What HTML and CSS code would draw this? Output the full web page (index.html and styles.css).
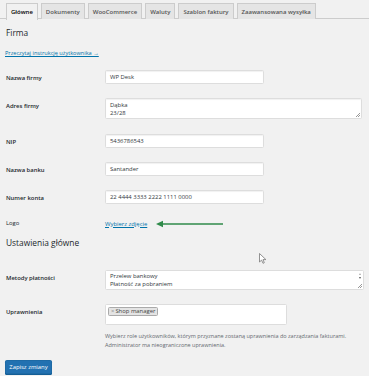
FILE: index.html
```html
<!DOCTYPE html>
<html lang="pl">
<head>
<meta charset="utf-8">
<link rel="stylesheet" href="styles.css">
</head>
<body>
<div class="page">
  <nav class="tabs">
    <a class="tab active">Główne</a>
    <a class="tab">Dokumenty</a>
    <a class="tab">WooCommerce</a>
    <a class="tab">Waluty</a>
    <a class="tab">Szablon faktury</a>
    <a class="tab">Zaawansowana wysyłka</a>
  </nav>

  <h2 class="heading h-firma">Firma</h2>
  <p class="manual"><a class="link">Przeczytaj instrukcję użytkownika →</a></p>

  <div class="form">
    <div class="row">
      <div class="label">Nazwa firmy</div>
      <div class="field"><div class="input w-reg">WP Desk</div></div>
    </div>
    <div class="row row-text">
      <div class="label">Adres firmy</div>
      <div class="field"><div class="textarea w-wide">Dąbka<br>23/28<span class="grip"></span></div></div>
    </div>
    <div class="row">
      <div class="label">NIP</div>
      <div class="field"><div class="input w-reg">5436786543</div></div>
    </div>
    <div class="row">
      <div class="label">Nazwa banku</div>
      <div class="field"><div class="input w-reg">Santander</div></div>
    </div>
    <div class="row">
      <div class="label">Numer konta</div>
      <div class="field"><div class="input w-reg">22 4444 3333 2222 1111 0000</div></div>
    </div>
    <div class="row row-logo">
      <div class="label label-plain">Logo</div>
      <div class="field field-logo">
        <a class="link link-logo">Wybierz zdjęcie</a>
        <svg class="arrow" width="68" height="8" viewBox="0 0 68 8"><path d="M4 4H67" stroke="#2f8a4a" stroke-width="1.6"/><path d="M0 4L7 0.8V7.2Z" fill="#2f8a4a"/></svg>
      </div>
    </div>
  </div>

  <h2 class="heading h-main">Ustawienia główne</h2>

  <div class="form form-main">
    <div class="row">
      <div class="label">Metody płatności</div>
      <div class="field">
        <div class="multiselect">
          <div class="opt">Przelew bankowy</div>
          <div class="opt">Płatność za pobraniem</div>
          <div class="scroll"><span class="up"></span><span class="down"></span></div>
          <span class="grip"></span>
        </div>
      </div>
    </div>
    <div class="row">
      <div class="label">Uprawnienia</div>
      <div class="field">
        <div class="select2"><span class="chip"><span class="x">×</span> Shop manager</span></div>
        <p class="desc">Wybierz role użytkowników, którym przyznane zostaną uprawnienia do zarządzania fakturami.<br>Administrator ma nieograniczone uprawnienia.</p>
      </div>
    </div>
  </div>

  <div class="actions"><button class="button-primary">Zapisz zmiany</button></div>

  <svg class="cursor" width="8" height="11" viewBox="0 0 8 11"><path d="M0.5 0.5V9L2.6 7.1L4 10.3L5.3 9.7L4 6.6H6.9Z" fill="#fff" stroke="#777" stroke-width="0.8" stroke-linejoin="round"/></svg>
</div>
</body>
</html>
```

FILE: styles.css
```css
html, body {
  margin: 0;
  padding: 0;
  background: #f1f1f1;
}
body {
  font-family: "Open Sans", "Liberation Sans", sans-serif;
  color: #23282d;
  font-size: 6px;
}
.page {
  position: relative;
  width: 369px;
  height: 376px;
  overflow: hidden;
}
.tabs {
  display: flex;
  gap: 3px;
  padding: 3px 0 0 6px;
  border-bottom: 1px solid #ccc;
  height: 15px;
}
.tab {
  display: flex;
  align-items: center;
  height: 15px;
  padding: 0 4px;
  background: #e5e5e5;
  border: 1px solid #ccc;
  border-bottom: none;
  font-size: 6px;
  font-weight: 600;
  color: #555;
  white-space: nowrap;
}
.tab.active {
  background: #f1f1f1;
  color: #000;
  height: 16px;
  margin-bottom: -1px;
}
.heading {
  margin: 0;
  font-size: 8.4px;
  font-weight: 400;
  line-height: 12px;
  color: #23282d;
  padding-left: 6px;
}
.h-firma { margin-top: 8px; }
.manual {
  margin: 10px 0 0 5px;
  line-height: 9px;
}
.link {
  color: #0073aa;
  text-decoration: underline;
  font-size: 5.6px;
}
.link-logo { font-size: 5.9px; }
.form {
  margin-top: 4.5px;
  padding-left: 6px;
}
.row {
  display: flex;
  align-items: flex-start;
  padding: 7px 0;
}
.row-text { padding-bottom: 8.5px; }
.label {
  width: 99px;
  flex: none;
  padding-top: 4px;
  line-height: 9px;
  font-size: 5.9px;
  font-weight: 600;
  color: #23282d;
}
.label-plain { font-weight: 400; }
.field { flex: none; }
.input, .textarea {
  box-sizing: border-box;
  background: #fff;
  border: 1px solid #ddd;
  border-radius: 1.5px;
  box-shadow: inset 0 1px 1px rgba(0,0,0,0.06);
  font-size: 5.9px;
  color: #32373c;
  padding-left: 4px;
}
.input {
  height: 14px;
  line-height: 12px;
}
.w-reg { width: 159px; }
.textarea {
  position: relative;
  width: 257px;
  height: 21px;
  line-height: 8px;
  padding-top: 2px;
}
.w-wide { width: 257px; }
.grip {
  position: absolute;
  right: 1px;
  bottom: 1px;
  width: 4px;
  height: 4px;
  background: linear-gradient(135deg, transparent 45%, #999 45%, #999 55%, transparent 55%, transparent 75%, #999 75%, #999 85%, transparent 85%);
}
.row-logo { padding-top: 4px; padding-bottom: 4px; }
.field-logo {
  display: flex;
  align-items: center;
  height: 13px;
  padding-top: 2px;
}
.arrow { margin-left: 9px; }
.h-main { margin-top: 3px; }
.form-main { margin-top: 13.5px; }
.multiselect {
  position: relative;
  box-sizing: border-box;
  width: 259px;
  height: 20px;
  background: #fff;
  border: 1px solid #ddd;
  border-radius: 1.5px;
  font-size: 5.9px;
  color: #32373c;
  padding: 1px 0 0 4px;
  line-height: 8.6px;
}
.scroll {
  position: absolute;
  top: 1px;
  right: 1px;
  width: 5px;
  height: 10px;
  display: flex;
  flex-direction: column;
  align-items: center;
  gap: 2px;
  padding-top: 1px;
}
.up {
  width: 0; height: 0;
  border-left: 1.5px solid transparent;
  border-right: 1.5px solid transparent;
  border-bottom: 2px solid #aaa;
}
.down {
  width: 0; height: 0;
  border-left: 1.5px solid transparent;
  border-right: 1.5px solid transparent;
  border-top: 2px solid #555;
}
.select2 {
  box-sizing: border-box;
  width: 182px;
  height: 21px;
  background: #fff;
  border: 1px solid #ddd;
  border-radius: 1.5px;
  padding: 2px 0 0 2px;
}
.chip {
  display: inline-flex;
  align-items: center;
  height: 9px;
  padding: 0 2px;
  background: #e4e4e4;
  border: 1px solid #aaa;
  border-radius: 1.5px;
  font-size: 5.9px;
  color: #444;
  box-sizing: border-box;
}
.x { color: #888; margin-right: 1px; }
.desc {
  margin: 7px 0 0 0;
  font-size: 5.5px;
  line-height: 9px;
  color: #646970;
  white-space: nowrap;
}
.actions {
  padding: 3px 0 0 5px;
}
.button-primary {
  display: block;
  height: 14px;
  width: 47px;
  padding: 0;
  background: #2271b1;
  border: 1px solid #1e6aa5;
  border-radius: 1.5px;
  color: #fff;
  font-family: "Open Sans", "Liberation Sans", sans-serif;
  font-size: 5.9px;
  box-shadow: 0 1px 0 #135e96;
}
.cursor {
  position: absolute;
  left: 259px;
  top: 253px;
}
```
